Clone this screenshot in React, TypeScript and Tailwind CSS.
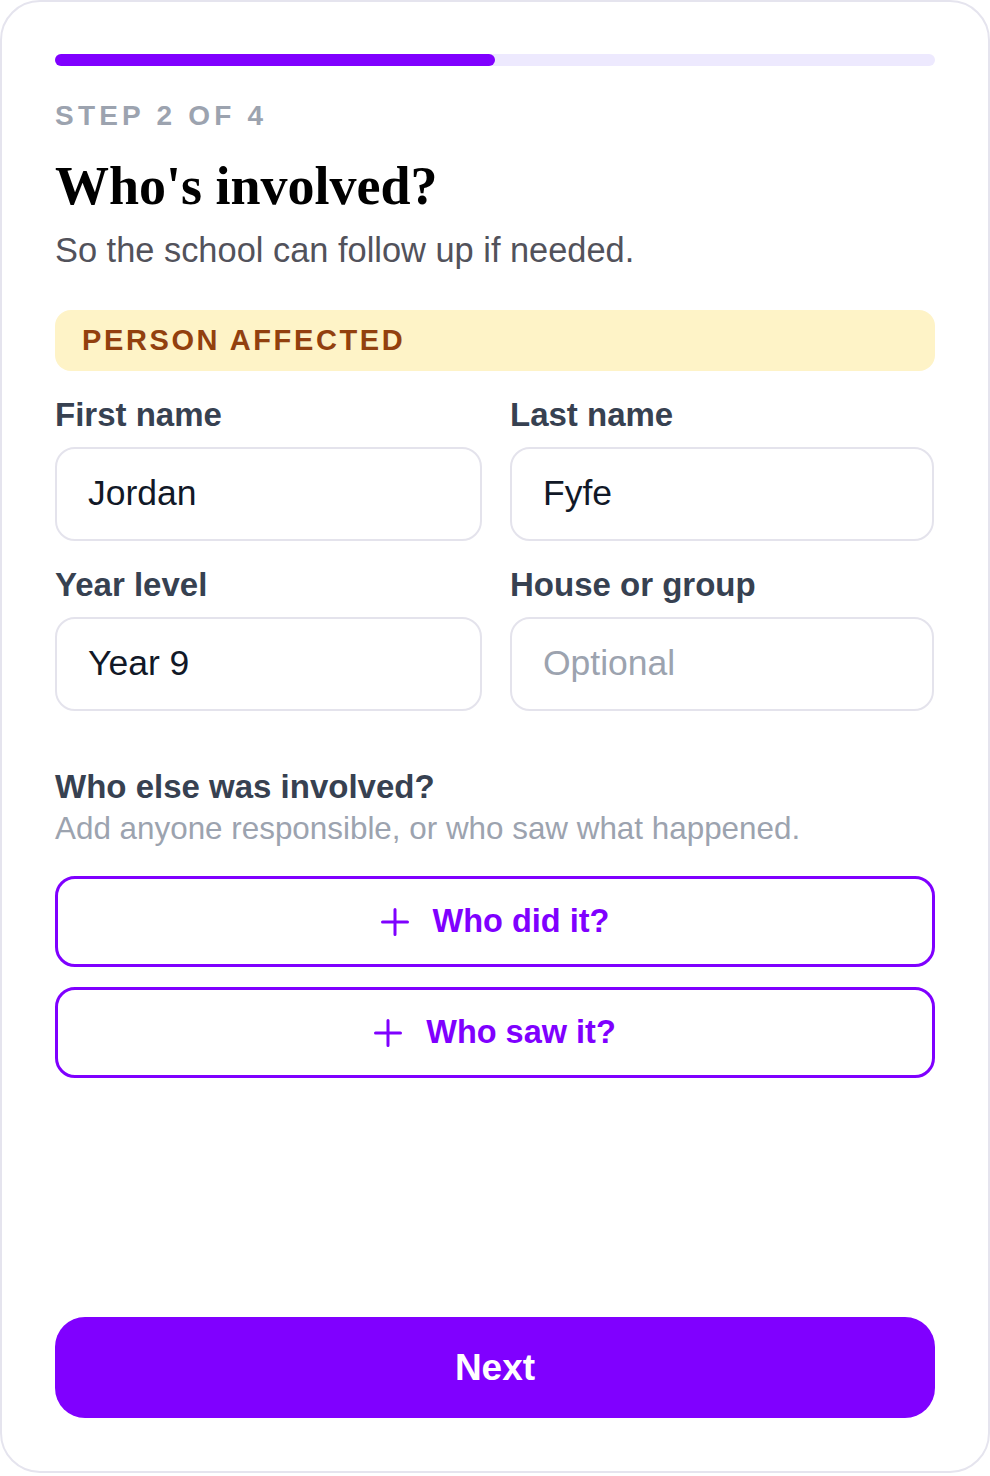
import React from 'react'

const fields = [
  { label: 'First name', value: 'Jordan' },
  { label: 'Last name', value: 'Fyfe' },
  { label: 'Year level', value: 'Year 9' },
  { label: 'House or group', value: '', placeholder: 'Optional' },
]

const PlusIcon = () => (
  <svg width="28" height="28" viewBox="0 0 28 28" fill="none" stroke="currentColor" strokeWidth="3" strokeLinecap="round">
    <path d="M14 1.5v25M1.5 14h25" />
  </svg>
)

const AddButton = ({ text, className = '' }: { text: string; className?: string }) => (
  <button className={`flex h-[91px] w-full items-center justify-center gap-[24px] rounded-[20px] border-[3px] border-[#7f00ff] bg-white text-[32.5px] font-bold text-[#7f00ff] ${className}`}>
    <PlusIcon />
    <span>{text}</span>
  </button>
)

const App = () => {
  return (
    <div className="min-h-screen bg-white font-['Liberation_Sans',sans-serif]">
      <div className="flex h-[1473px] w-[990px] flex-col rounded-[40px] border-2 border-[#e5e4ee] bg-white px-[53px] pt-[52px] pb-[53px]">
        {/* progress */}
        <div className="h-3 w-full rounded-full bg-[#ede9fe]">
          <div className="h-3 w-1/2 rounded-full bg-[#8000ff]" />
        </div>

        <p className="mt-[33px] text-[28px] leading-[34px] font-bold tracking-[0.15em] text-[#9ca3af]">
          STEP 2 OF 4
        </p>
        <h1 className="mt-[22px] font-['Liberation_Serif',serif] text-[54px] leading-[62px] font-bold text-black">
          Who's involved?
        </h1>
        <p className="mt-[13px] text-[34.4px] leading-[40px] text-[#52525b]">
          So the school can follow up if needed.
        </p>

        <div className="mt-[40px] flex h-[61px] items-center rounded-[16px] bg-[#fef3c7] px-[27px]">
          <span className="text-[29px] font-bold tracking-[0.09em] text-[#92400e]">PERSON AFFECTED</span>
        </div>

        <div className="mt-[24px] grid grid-cols-[427px_424px] gap-x-[28px] gap-y-[24px]">
          {fields.map((f) => (
            <div key={f.label} className="flex flex-col">
              <label className="text-[33px] leading-[40px] font-bold text-[#374151]">{f.label}</label>
              <div className="mt-3 flex h-[94px] items-center rounded-[20px] border-2 border-[#e4e3ec] px-[31px] text-[35.5px]">
                {f.value ? (
                  <span className="text-[#111827]">{f.value}</span>
                ) : (
                  <span className="text-[#9ca3af]">{f.placeholder}</span>
                )}
              </div>
            </div>
          ))}
        </div>

        <p className="mt-[56px] text-[33px] leading-[40px] font-bold text-[#374151]">Who else was involved?</p>
        <p className="mt-[3px] text-[31.4px] leading-[38px] text-[#9ca3af]">
          Add anyone responsible, or who saw what happened.
        </p>

        <AddButton text="Who did it?" className="mt-[28px]" />
        <AddButton text="Who saw it?" className="mt-[20px]" />

        <div className="flex-1" />

        <button className="h-[101px] w-full rounded-[30px] bg-[#8000ff] text-[37px] font-bold text-white">Next</button>
      </div>
    </div>
  )
}

export default App
